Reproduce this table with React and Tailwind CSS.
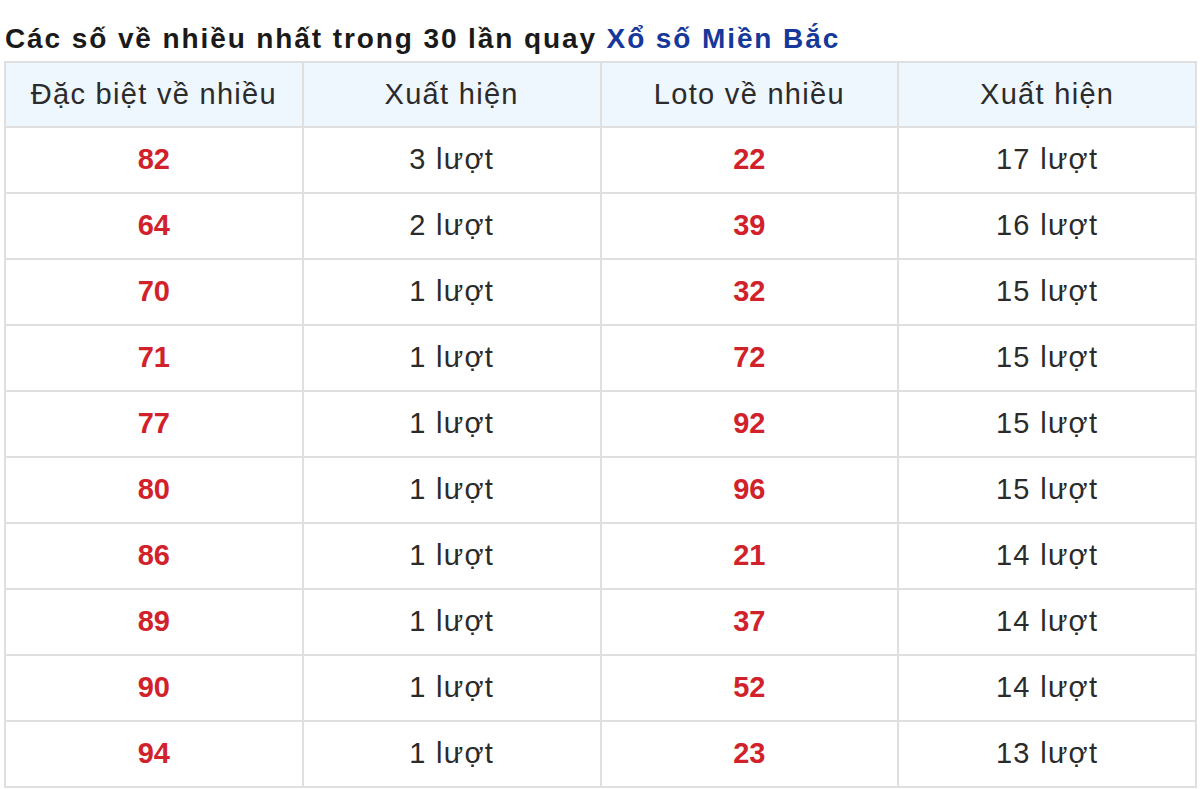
import React from "react";

const rows = [
  ["82", "3 lượt", "22", "17 lượt"],
  ["64", "2 lượt", "39", "16 lượt"],
  ["70", "1 lượt", "32", "15 lượt"],
  ["71", "1 lượt", "72", "15 lượt"],
  ["77", "1 lượt", "92", "15 lượt"],
  ["80", "1 lượt", "96", "15 lượt"],
  ["86", "1 lượt", "21", "14 lượt"],
  ["89", "1 lượt", "37", "14 lượt"],
  ["90", "1 lượt", "52", "14 lượt"],
  ["94", "1 lượt", "23", "13 lượt"],
];

export default function App() {
  return (
    <div className="w-[1200px] h-[789px] bg-white overflow-hidden" style={{ fontFamily: '"Liberation Sans", Arial, sans-serif' }}>
      <div className="h-[61px] pt-[23px] pl-[5px] text-[28px] leading-[32px] font-bold tracking-[1.9px] text-[#1a1a1a] whitespace-nowrap">
        Các số về nhiều nhất trong 30 lần quay <span className="text-[#15389a]">Xổ số Miền Bắc</span>
      </div>
      <table className="ml-[4px] w-[1193px] border-collapse table-fixed text-[29px] text-[#2b2b2b]">
        <thead>
          <tr className="h-[65px] bg-[#eef6fe]">
            {["Đặc biệt về nhiều", "Xuất hiện", "Loto về nhiều", "Xuất hiện"].map((h, i) => (
              <th key={i} className="border-2 border-[#dfdfdf] font-normal text-center p-0 tracking-[1.3px]">{h}</th>
            ))}
          </tr>
        </thead>
        <tbody>
          {rows.map((r, i) => (
            <tr key={i} className="h-[66px]">
              <td className="border-2 border-[#dfdfdf] text-center font-bold text-[#d1222b] p-0">{r[0]}</td>
              <td className="border-2 border-[#dfdfdf] text-center p-0 tracking-[1.3px]">{r[1]}</td>
              <td className="border-2 border-[#dfdfdf] text-center font-bold text-[#d1222b] p-0">{r[2]}</td>
              <td className="border-2 border-[#dfdfdf] text-center p-0 tracking-[1.3px]">{r[3]}</td>
            </tr>
          ))}
        </tbody>
      </table>
    </div>
  );
}
